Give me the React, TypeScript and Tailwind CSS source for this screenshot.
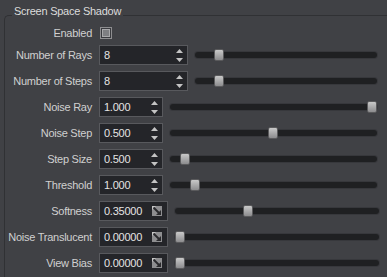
import React from "react";

type Row = {
  label: string;
  value: string;
  w: number;
  kind: "spin" | "drag";
  trackStart: number;
  trackEnd: number;
  thumb: number;
};

const rows: Row[] = [
  { label: "Number of Rays", value: "8", w: 89, kind: "spin", trackStart: 195, trackEnd: 377, thumb: 219 },
  { label: "Number of Steps", value: "8", w: 89, kind: "spin", trackStart: 195, trackEnd: 377, thumb: 219 },
  { label: "Noise Ray", value: "1.000", w: 64, kind: "spin", trackStart: 170, trackEnd: 377, thumb: 372 },
  { label: "Noise Step", value: "0.500", w: 64, kind: "spin", trackStart: 170, trackEnd: 377, thumb: 273 },
  { label: "Step Size", value: "0.500", w: 64, kind: "spin", trackStart: 170, trackEnd: 377, thumb: 185 },
  { label: "Threshold", value: "1.000", w: 64, kind: "spin", trackStart: 170, trackEnd: 377, thumb: 195 },
  { label: "Softness", value: "0.35000", w: 69, kind: "drag", trackStart: 175, trackEnd: 379, thumb: 248 },
  { label: "Noise Translucent", value: "0.00000", w: 69, kind: "drag", trackStart: 175, trackEnd: 379, thumb: 180 },
  { label: "View Bias", value: "0.00000", w: 69, kind: "drag", trackStart: 175, trackEnd: 379, thumb: 180 },
];

function SpinArrows() {
  return (
    <div className="flex flex-col items-center gap-[5px] mr-[4px]">
      <svg width="7" height="4" viewBox="0 0 7 4">
        <polygon points="0,4 3.5,0 7,4" fill="#c4c4c4" />
      </svg>
      <svg width="7" height="4" viewBox="0 0 7 4">
        <polygon points="0,0 3.5,4 7,0" fill="#c4c4c4" />
      </svg>
    </div>
  );
}

function DragIcon() {
  return (
    <svg width="10" height="10" viewBox="0 0 10 10" className="mr-[5px]">
      <rect x="0" y="0" width="10" height="10" fill="#8e8e90" />
      <polygon points="0,0 4,0 0,4" fill="#c8c8c8" />
      <line x1="1.5" y1="1.5" x2="8" y2="8" stroke="#2a2a2d" strokeWidth="2" />
      <polygon points="9,4 9,9 4,9" fill="#2a2a2d" />
    </svg>
  );
}

function Slider({ row }: { row: Row }) {
  const width = row.trackEnd - row.trackStart;
  const left = row.thumb - 5 - row.trackStart;
  return (
    <div className="relative h-[20px] flex items-center" style={{ width }}>
      <div className="w-full h-[6px] rounded-full bg-[#1f2022] shadow-[0_0_0_1px_#37383c]" />
      <div
        className="absolute top-[4px] w-[10px] h-[12px] rounded-[2px] border border-[#5a5a5c] bg-gradient-to-b from-[#c9c9c9] to-[#8c8c8e]"
        style={{ left }}
      />
    </div>
  );
}

export default function App() {
  return (
    <div
      className="w-[387px] h-[277px] bg-[#404145] text-[11px] tracking-[-0.25px] text-[#d0d0d0] overflow-hidden pt-[4px]"
      style={{ fontFamily: '"Liberation Sans", Arial, sans-serif' }}
    >
      <div className="pl-[12px] h-[15px] leading-[15px] relative z-10">
        <span className="inline-block px-[2px] bg-[#404145] text-[#dcdcdc]">Screen Space Shadow</span>
      </div>
      <div className="ml-[4px] -mt-[4px] border-l border-t border-[#303134] rounded-tl-[5px] h-[262px]">
        <div className="flex flex-col gap-[6px] pt-[11px]">
          <div className="flex items-center h-[12px]">
            <div className="w-[87px] text-right leading-[12px]">Enabled</div>
            <div className="ml-[8px] w-[12px] h-[12px] border border-[#8e8e90] bg-[#3a3b3f] flex items-center justify-center">
              <div className="w-[8px] h-[8px] border border-[#a8a8aa] bg-[#7e7f82]" />
            </div>
          </div>
          {rows.map((row) => (
            <div key={row.label} className="flex items-center h-[20px]">
              <div className="w-[87px] text-right whitespace-nowrap leading-[20px]">{row.label}</div>
              <div
                className="ml-[7px] h-[20px] flex items-center justify-between bg-[#242529] border border-[#58595d] pl-[4px] text-[#e4e4e4]"
                style={{ width: row.w }}
              >
                <span className="leading-[18px]">{row.value}</span>
                {row.kind === "spin" ? <SpinArrows /> : <DragIcon />}
              </div>
              <div className="ml-[7px]">
                <Slider row={row} />
              </div>
            </div>
          ))}
        </div>
      </div>
    </div>
  );
}
